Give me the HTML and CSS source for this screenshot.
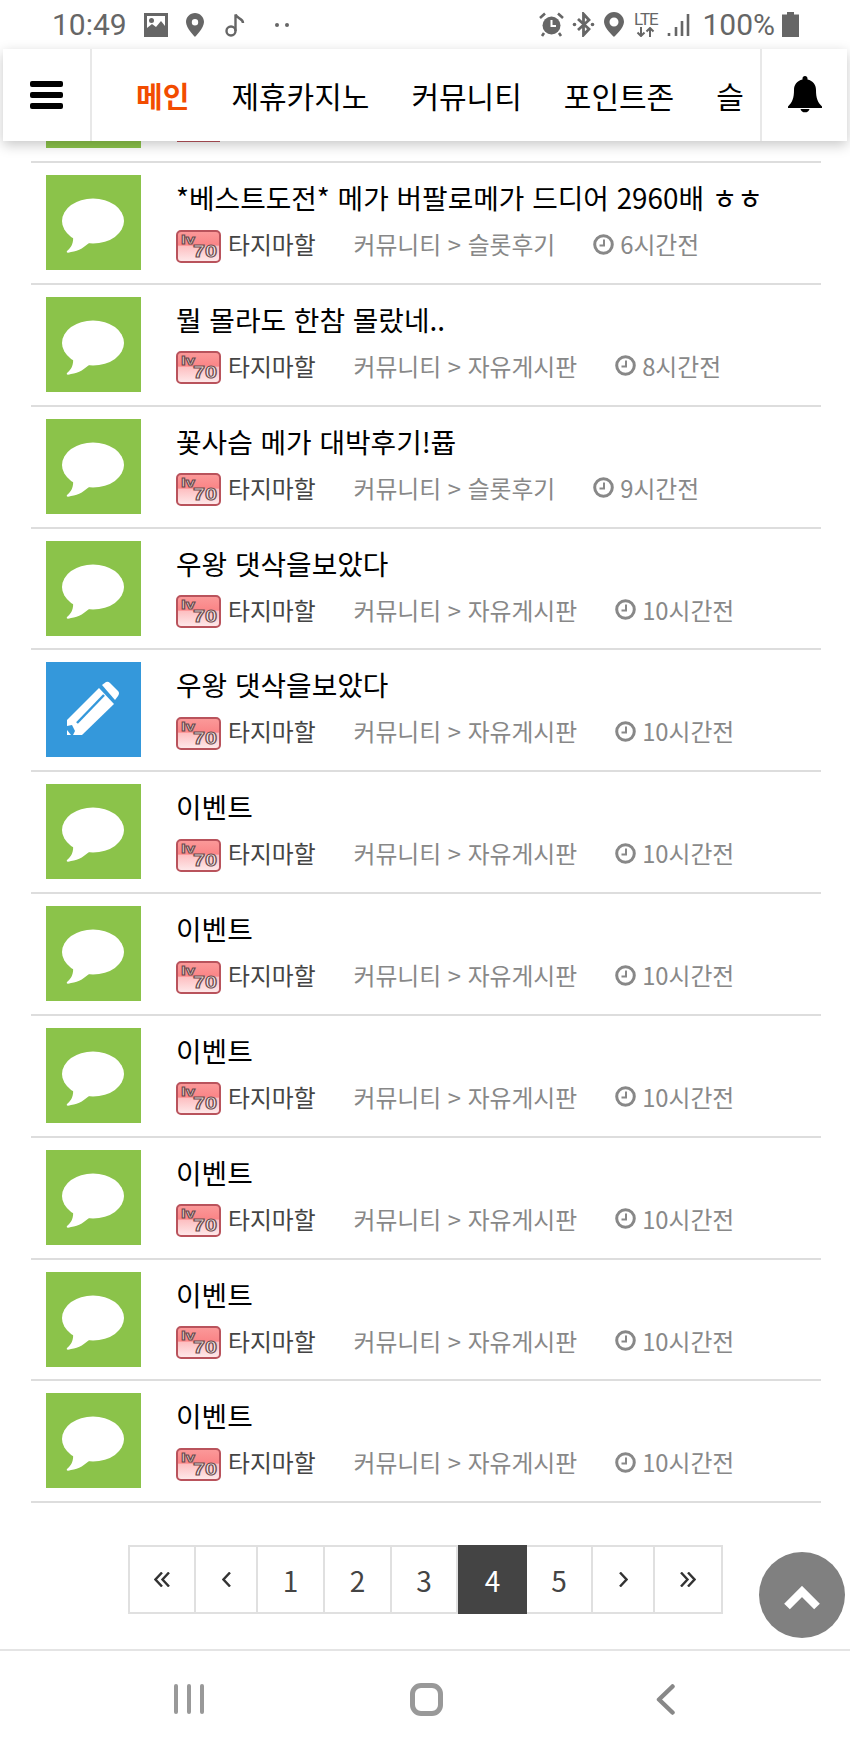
FILE: index.html
```html
<!DOCTYPE html>
<html lang="ko">

<head>
    <meta charset="UTF-8">
    <meta name="viewport" content="width=device-width, initial-scale=1.0">
    <title>커뮤니티</title>
    <link rel="stylesheet" href="styles.css">
</head>

<body>
    <svg class="sprites" aria-hidden="true">
        <defs>
            <linearGradient id="badgeFill" x1="0" y1="0" x2="0" y2="1">
                <stop offset="0" stop-color="#fb9a9a" />
                <stop offset="0.45" stop-color="#fa8587" />
                <stop offset="0.5" stop-color="#fdc0c2" />
                <stop offset="1" stop-color="#feeaeb" />
            </linearGradient>
            <symbol id="talk" viewBox="0 0 95 95">
                <ellipse cx="47" cy="46" rx="31" ry="22.5" fill="#fff" />
                <path d="M27 60 C28 68 25 73 21 76 C20 78 22 78 25 77 C33 76 39 72 45 66 Z" fill="#fff" />
            </symbol>
            <symbol id="pencil" viewBox="0 0 95 95">
                <path d="M21 58 L53 26 L68 42 L36 73 L21 73 Z" fill="#fff" />
                <path d="M56 23 L60 20 Q62 19 64 21 L72 29 Q74 31 72 34 L69 38 Z" fill="#fff" />
                <path d="M31 61 L58 33" stroke="#3498db" stroke-width="2.5" fill="none" />
                <path d="M21 64 L26 63 L29 69 L27 73 L21 73 Z" fill="#3498db" />
                <path d="M21 68 L25 73 L21 73 Z" fill="#fff" />
            </symbol>
            <symbol id="level" viewBox="0 0 45 33">
                <rect x="1" y="1" width="43" height="31" rx="4" fill="url(#badgeFill)" stroke="#b9535c" stroke-width="2" />
                <text x="5" y="14" class="badge-lv" textLength="14" lengthAdjust="spacingAndGlyphs">lv</text>
                <text x="17" y="27" class="badge-num" textLength="24" lengthAdjust="spacingAndGlyphs">70</text>
            </symbol>
            <symbol id="clock" viewBox="0 0 21 21">
                <circle cx="10.5" cy="10.5" r="8.8" fill="none" stroke="#888" stroke-width="3" />
                <path d="M11 5.5 V11.5 H6.5" fill="none" stroke="#888" stroke-width="2" />
            </symbol>
        </defs>
    </svg>

    <div class="status-bar">
        <div class="status-left">
            <span class="status-time">10:49</span>
            <svg class="ico-image" viewBox="0 0 24 24">
                <path d="M0 0 H24 V24 H0 Z M3 3 V15 L8 11 L12 14 L17 8 L21 13 V3 Z" fill="#666" fill-rule="evenodd" />
                <circle cx="7.5" cy="7.5" r="2.5" fill="#666" />
            </svg>
            <svg class="ico-pin" viewBox="0 0 18 24">
                <path d="M9 0 C4 0 0 4 0 9 C0 15 9 24 9 24 C9 24 18 15 18 9 C18 4 14 0 9 0 Z M9 6 A3.2 3.2 0 1 1 9 12.4 A3.2 3.2 0 1 1 9 6 Z" fill="#666" fill-rule="evenodd" />
            </svg>
            <svg class="ico-note" viewBox="0 0 20 24">
                <circle cx="6" cy="18" r="4.5" fill="none" stroke="#666" stroke-width="2.4" />
                <path d="M10.5 18 V1.5 C12 6 18 5 18 10" fill="none" stroke="#666" stroke-width="2.4" />
            </svg>
            <span class="status-dots"><i></i><i></i></span>
        </div>
        <div class="status-right">
            <svg class="ico-alarm" viewBox="0 0 25 25">
                <circle cx="12.5" cy="13.5" r="9" fill="#666" />
                <path d="M12.5 8 V14 H17" fill="none" stroke="#fff" stroke-width="2" />
                <path d="M1 6 L6 1.5 M24 6 L19 1.5 M5 21 L3 24 M20 21 L22 24" stroke="#666" stroke-width="2.6" fill="none" />
            </svg>
            <svg class="ico-bt" viewBox="0 0 23 25">
                <path d="M6 7 L17 17 L11.5 23 V2 L17 8 L6 18" fill="none" stroke="#666" stroke-width="2.8" />
                <circle cx="2.5" cy="12.5" r="1.8" fill="#666" />
                <circle cx="20.5" cy="12.5" r="1.8" fill="#666" />
            </svg>
            <svg class="ico-pin-big" viewBox="0 0 20 25">
                <path d="M10 0 C4.5 0 0 4.5 0 10 C0 16 10 25 10 25 C10 25 20 16 20 10 C20 4.5 15.5 0 10 0 Z M10 5.5 A4.5 4.5 0 1 1 10 14.5 A4.5 4.5 0 1 1 10 5.5 Z" fill="#666" fill-rule="evenodd" />
            </svg>
            <span class="lte">
                <span class="lte-text">LTE</span>
                <svg class="ico-updown" viewBox="0 0 20 10">
                    <path d="M5 0 V9 M1.5 5.5 L5 9 L8.5 5.5 M14 10 V1 M10.5 4.5 L14 1 L17.5 4.5" fill="none" stroke="#666" stroke-width="2" />
                </svg>
            </span>
            <svg class="ico-signal" viewBox="0 0 23 24">
                <path d="M2 20 V23 M9 14 V23 M15 8 V23 M21 1 V23" stroke="#666" stroke-width="2.6" fill="none" />
            </svg>
            <span class="status-pct">100%</span>
            <svg class="ico-battery" viewBox="0 0 17 25">
                <path d="M5 0 H12 V2.5 H17 V25 H0 V2.5 H5 Z" fill="#666" />
            </svg>
        </div>
    </div>

    <header class="top-nav">
        <div class="nav-burger"><span></span><span></span><span></span></div>
        <nav class="nav-menu">
            <a class="nav-item active">메인</a>
            <a class="nav-item">제휴카지노</a>
            <a class="nav-item">커뮤니티</a>
            <a class="nav-item">포인트존</a>
            <a class="nav-item">슬</a>
        </nav>
        <div class="nav-bell">
            <svg viewBox="0 0 34 37">
                <path d="M17 0 C15.5 0 14.5 1 14.5 2.5 V3.6 C9 4.8 6 9 6 14 C6 22 4.5 26 0 30.5 V32 H34 V30.5 C29.5 26 28 22 28 14 C28 9 25 4.8 19.5 3.6 V2.5 C19.5 1 18.5 0 17 0 Z" fill="#000" />
                <path d="M12.5 33 A4.7 4.7 0 0 0 21.5 33 Z" fill="#000" />
            </svg>
        </div>
    </header>

    <main class="content">
        <div class="post-peek">
            <div class="peek-tile"></div>
            <div class="peek-badge"></div>
        </div>
        <ul class="post-list">
            <li class="post">
                <div class="tile tile-green"><svg><use href="#talk" /></svg></div>
                <div class="post-body">
                    <div class="post-title">*베스트도전* 메가 버팔로메가 드디어 2960배 ㅎㅎ</div>
                    <div class="post-meta">
                        <span class="author"><svg class="badge"><use href="#level" /></svg>타지마할</span>
                        <span class="category">커뮤니티 &gt; 슬롯후기</span>
                        <span class="time"><svg class="clock"><use href="#clock" /></svg>6시간전</span>
                    </div>
                </div>
            </li>
            <li class="post">
                <div class="tile tile-green"><svg><use href="#talk" /></svg></div>
                <div class="post-body">
                    <div class="post-title">뭘 몰라도 한참 몰랐네..</div>
                    <div class="post-meta">
                        <span class="author"><svg class="badge"><use href="#level" /></svg>타지마할</span>
                        <span class="category">커뮤니티 &gt; 자유게시판</span>
                        <span class="time"><svg class="clock"><use href="#clock" /></svg>8시간전</span>
                    </div>
                </div>
            </li>
            <li class="post">
                <div class="tile tile-green"><svg><use href="#talk" /></svg></div>
                <div class="post-body">
                    <div class="post-title">꽃사슴 메가 대박후기!퓹</div>
                    <div class="post-meta">
                        <span class="author"><svg class="badge"><use href="#level" /></svg>타지마할</span>
                        <span class="category">커뮤니티 &gt; 슬롯후기</span>
                        <span class="time"><svg class="clock"><use href="#clock" /></svg>9시간전</span>
                    </div>
                </div>
            </li>
            <li class="post">
                <div class="tile tile-green"><svg><use href="#talk" /></svg></div>
                <div class="post-body">
                    <div class="post-title">우왕 댓삭을보았다</div>
                    <div class="post-meta">
                        <span class="author"><svg class="badge"><use href="#level" /></svg>타지마할</span>
                        <span class="category">커뮤니티 &gt; 자유게시판</span>
                        <span class="time"><svg class="clock"><use href="#clock" /></svg>10시간전</span>
                    </div>
                </div>
            </li>
            <li class="post">
                <div class="tile tile-blue"><svg><use href="#pencil" /></svg></div>
                <div class="post-body">
                    <div class="post-title">우왕 댓삭을보았다</div>
                    <div class="post-meta">
                        <span class="author"><svg class="badge"><use href="#level" /></svg>타지마할</span>
                        <span class="category">커뮤니티 &gt; 자유게시판</span>
                        <span class="time"><svg class="clock"><use href="#clock" /></svg>10시간전</span>
                    </div>
                </div>
            </li>
            <li class="post">
                <div class="tile tile-green"><svg><use href="#talk" /></svg></div>
                <div class="post-body">
                    <div class="post-title">이벤트</div>
                    <div class="post-meta">
                        <span class="author"><svg class="badge"><use href="#level" /></svg>타지마할</span>
                        <span class="category">커뮤니티 &gt; 자유게시판</span>
                        <span class="time"><svg class="clock"><use href="#clock" /></svg>10시간전</span>
                    </div>
                </div>
            </li>
            <li class="post">
                <div class="tile tile-green"><svg><use href="#talk" /></svg></div>
                <div class="post-body">
                    <div class="post-title">이벤트</div>
                    <div class="post-meta">
                        <span class="author"><svg class="badge"><use href="#level" /></svg>타지마할</span>
                        <span class="category">커뮤니티 &gt; 자유게시판</span>
                        <span class="time"><svg class="clock"><use href="#clock" /></svg>10시간전</span>
                    </div>
                </div>
            </li>
            <li class="post">
                <div class="tile tile-green"><svg><use href="#talk" /></svg></div>
                <div class="post-body">
                    <div class="post-title">이벤트</div>
                    <div class="post-meta">
                        <span class="author"><svg class="badge"><use href="#level" /></svg>타지마할</span>
                        <span class="category">커뮤니티 &gt; 자유게시판</span>
                        <span class="time"><svg class="clock"><use href="#clock" /></svg>10시간전</span>
                    </div>
                </div>
            </li>
            <li class="post">
                <div class="tile tile-green"><svg><use href="#talk" /></svg></div>
                <div class="post-body">
                    <div class="post-title">이벤트</div>
                    <div class="post-meta">
                        <span class="author"><svg class="badge"><use href="#level" /></svg>타지마할</span>
                        <span class="category">커뮤니티 &gt; 자유게시판</span>
                        <span class="time"><svg class="clock"><use href="#clock" /></svg>10시간전</span>
                    </div>
                </div>
            </li>
            <li class="post">
                <div class="tile tile-green"><svg><use href="#talk" /></svg></div>
                <div class="post-body">
                    <div class="post-title">이벤트</div>
                    <div class="post-meta">
                        <span class="author"><svg class="badge"><use href="#level" /></svg>타지마할</span>
                        <span class="category">커뮤니티 &gt; 자유게시판</span>
                        <span class="time"><svg class="clock"><use href="#clock" /></svg>10시간전</span>
                    </div>
                </div>
            </li>
            <li class="post">
                <div class="tile tile-green"><svg><use href="#talk" /></svg></div>
                <div class="post-body">
                    <div class="post-title">이벤트</div>
                    <div class="post-meta">
                        <span class="author"><svg class="badge"><use href="#level" /></svg>타지마할</span>
                        <span class="category">커뮤니티 &gt; 자유게시판</span>
                        <span class="time"><svg class="clock"><use href="#clock" /></svg>10시간전</span>
                    </div>
                </div>
            </li>
        </ul>

        <div class="pager">
            <a class="page-cell arrow-wide"><svg viewBox="0 0 16 15"><path d="M8 0.5 L1.5 7.5 L8 14.5 M15 0.5 L8.5 7.5 L15 14.5" /></svg></a>
            <a class="page-cell arrow-narrow"><svg viewBox="0 0 9 15"><path d="M8 0.5 L1.5 7.5 L8 14.5" /></svg></a>
            <a class="page-cell">1</a>
            <a class="page-cell">2</a>
            <a class="page-cell">3</a>
            <a class="page-cell current">4</a>
            <a class="page-cell">5</a>
            <a class="page-cell arrow-narrow"><svg viewBox="0 0 9 15"><path d="M1 0.5 L7.5 7.5 L1 14.5" /></svg></a>
            <a class="page-cell arrow-wide"><svg viewBox="0 0 16 15"><path d="M1 0.5 L7.5 7.5 L1 14.5 M8 0.5 L14.5 7.5 L8 14.5" /></svg></a>
        </div>
    </main>

    <a class="to-top">
        <svg viewBox="0 0 36 24"><path d="M3 20.5 L18 5.5 L33 20.5" /></svg>
    </a>

    <footer class="soft-keys">
        <div class="key-recent"><span></span><span></span><span></span></div>
        <div class="key-home"></div>
        <svg class="key-back" viewBox="0 0 19 31"><path d="M16.5 2.5 L3 15.5 L16.5 28.5" /></svg>
    </footer>
</body>

</html>
```

FILE: styles.css
```css
* {
    box-sizing: border-box;
}

html,
body {
    margin: 0;
    padding: 0;
    height: 1747px;
    overflow: hidden;
}

body {
    background: #fff;
    font-family: "Noto Sans CJK KR", sans-serif;
    color: #000;
    position: relative;
    display: flex;
    flex-direction: column;
}

.sprites {
    position: absolute;
    width: 0;
    height: 0;
}

.badge-lv,
.badge-num {
    font-family: "Liberation Sans", sans-serif;
    font-weight: bold;
    fill: #f4eeee;
    stroke: #6d4a4c;
    stroke-width: 1;
}

.badge-lv {
    font-size: 13px;
}

.badge-num {
    font-size: 16px;
}

/* status bar */
.status-bar {
    height: 49px;
    flex-shrink: 0;
    display: flex;
    justify-content: space-between;
    align-items: center;
    padding: 0 51px 0 52px;
    color: #666;
    font-family: Roboto, sans-serif;
}

.status-left,
.status-right {
    display: flex;
    align-items: center;
}

.status-time {
    font-size: 30px;
    margin-right: 17px;
}

.ico-image {
    width: 24px;
    height: 24px;
    margin-right: 18px;
}

.ico-pin {
    width: 18px;
    height: 24px;
    margin-right: 21px;
}

.ico-note {
    width: 20px;
    height: 24px;
    margin-right: 30px;
}

.status-dots {
    display: flex;
    gap: 6px;
}

.status-dots i {
    width: 4px;
    height: 4px;
    border-radius: 50%;
    background: #666;
}

.ico-alarm {
    width: 25px;
    height: 25px;
    margin-right: 8px;
}

.ico-bt {
    width: 23px;
    height: 25px;
    margin-right: 9px;
}

.ico-pin-big {
    width: 20px;
    height: 25px;
    margin-right: 6px;
}

.lte {
    display: flex;
    flex-direction: column;
    align-items: center;
    width: 31px;
    margin-right: 6px;
}

.lte-text {
    font-size: 17px;
    line-height: 14px;
    letter-spacing: -1px;
}

.ico-updown {
    width: 20px;
    height: 10px;
    margin-top: 1px;
}

.ico-signal {
    width: 23px;
    height: 24px;
    margin-right: 12px;
}

.status-pct {
    font-size: 30px;
    margin-right: 7px;
}

.ico-battery {
    width: 17px;
    height: 25px;
}

/* header */
.top-nav {
    height: 92px;
    flex-shrink: 0;
    margin: 0 3px;
    background: #fff;
    display: flex;
    box-shadow: 0 4px 12px rgba(0, 0, 0, 0.22);
    position: relative;
    z-index: 2;
}

.nav-burger {
    width: 89px;
    flex-shrink: 0;
    border-right: 2px solid #e8e8e8;
    display: flex;
    flex-direction: column;
    justify-content: center;
    gap: 5px;
    padding-left: 27px;
}

.nav-burger span {
    display: block;
    width: 33px;
    height: 6px;
    border-radius: 2px;
    background: #000;
}

.nav-menu {
    flex: 1;
    min-width: 0;
    display: flex;
    align-items: center;
    gap: 42px;
    padding-left: 44px;
    white-space: nowrap;
}

.nav-item {
    font-size: 30px;
    line-height: 40px;
}

.nav-item.active {
    color: #f24c00;
    font-weight: 700;
    font-size: 29px;
}

.nav-bell {
    width: 87px;
    flex-shrink: 0;
    border-left: 2px solid #e8e8e8;
    display: flex;
    align-items: center;
    justify-content: center;
}

.nav-bell svg {
    width: 34px;
    height: 37px;
    margin-top: -2px;
}

/* list */
.content {
    flex: 1;
    min-height: 0;
    padding: 0 29px 0 31px;
}

.post-peek {
    height: 20px;
    display: flex;
    align-items: flex-start;
    padding-left: 15px;
}

.peek-tile {
    width: 95px;
    height: 7px;
    background: #8bc34a;
}

.peek-badge {
    width: 43px;
    height: 1px;
    margin-left: 36px;
    background: #b9535c;
}

.post-list {
    list-style: none;
    margin: 0;
    padding: 0;
    border-top: 2px solid #ddd;
}

.post {
    height: 121.85px;
    padding: 12px 0 0 15px;
    display: flex;
    border-bottom: 2px solid #ddd;
}

.tile {
    width: 95px;
    height: 95px;
    flex-shrink: 0;
}

.tile svg {
    display: block;
    width: 95px;
    height: 95px;
}

.tile-green {
    background: #8bc34a;
}

.tile-blue {
    background: #3498db;
}

.post-body {
    margin-left: 35px;
    min-width: 0;
}

.post-title {
    font-size: 27.8px;
    line-height: 40px;
    margin-top: 2px;
    white-space: nowrap;
}

.post-meta {
    display: flex;
    align-items: center;
    gap: 38px;
    font-size: 23.8px;
    line-height: 34px;
    margin-top: 10px;
    white-space: nowrap;
}

.author {
    display: flex;
    align-items: center;
    color: #444;
}

.badge {
    width: 45px;
    height: 33px;
    margin-right: 7px;
    position: relative;
    top: 2px;
}

.category {
    color: #888;
}

.time {
    display: flex;
    align-items: center;
    color: #888;
}

.clock {
    width: 21px;
    height: 21px;
    margin-right: 6px;
}

/* pagination */
.pager {
    display: grid;
    grid-template-columns: 66px 62px 67px 67px 66px 69px 66px 62px 66px;
    width: 595px;
    height: 69px;
    margin: 42px 0 0 97px;
    border: 2px solid #e0e0e0;
}

.page-cell {
    display: flex;
    align-items: center;
    justify-content: center;
    font-size: 28px;
    color: #444;
    border-right: 2px solid #e0e0e0;
}

.page-cell:last-child {
    border-right: 0;
}

.page-cell.current {
    background: #444;
    color: #fff;
    margin: -2px 0;
    border-right: 0;
}

.page-cell svg {
    height: 15px;
    fill: none;
    stroke: #333;
    stroke-width: 2.4;
}

.arrow-wide svg {
    width: 16px;
}

.arrow-narrow svg {
    width: 9px;
}

/* floating button */
.to-top {
    position: absolute;
    left: 759px;
    top: 1552px;
    width: 86px;
    height: 86px;
    border-radius: 50%;
    background: #808080;
    z-index: 3;
    display: flex;
    align-items: center;
    justify-content: center;
}

.to-top svg {
    width: 36px;
    height: 24px;
    margin-top: 6px;
    fill: none;
    stroke: #fff;
    stroke-width: 8;
}

/* android keys */
.soft-keys {
    height: 98px;
    flex-shrink: 0;
    border-top: 2px solid #e4e4e4;
    display: flex;
    align-items: center;
    padding-left: 174px;
}

.key-recent {
    display: flex;
    gap: 9px;
}

.key-recent span {
    width: 4px;
    height: 30px;
    border-radius: 2px;
    background: #999;
}

.key-home {
    width: 33px;
    height: 33px;
    margin-left: 206px;
    border: 5px solid #999;
    border-radius: 11px;
}

.key-back {
    width: 19px;
    height: 31px;
    margin-left: 213px;
    fill: none;
    stroke: #888;
    stroke-width: 4.5;
    stroke-linecap: round;
    stroke-linejoin: round;
}
```
